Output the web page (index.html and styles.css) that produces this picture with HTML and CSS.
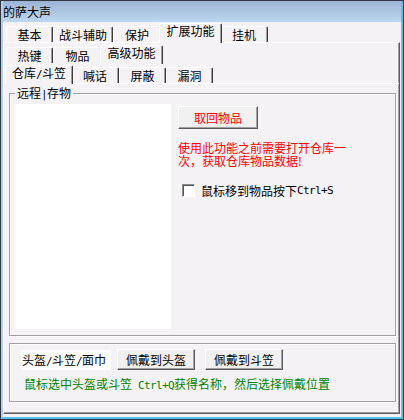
FILE: index.html
```html
<!DOCTYPE html>
<html lang="zh-CN">
<head>
<meta charset="utf-8">
<title>的萨大声</title>
<link rel="stylesheet" href="styles.css">
</head>
<body>
<div class="window">
  <div class="frame">
    <div class="title">的萨大声</div>
    <div class="client">
      <div class="strip s1">
        <div class="tab w47">基本</div>
        <div class="tab w60">战斗辅助</div>
        <div class="tab w48">保护</div>
        <div class="tab w63 sel">扩展功能</div>
        <div class="tab w48">挂机</div>
      </div>
      <div class="panel">
        <div class="strip s2">
          <div class="tab w47">热键</div>
          <div class="tab w49">物品</div>
          <div class="tab w63 sel">高级功能</div>
        </div>
        <div class="strip s3">
          <div class="tab w68 sel">仓库<span class="a">/</span>斗笠</div>
          <div class="tab w48">喊话</div>
          <div class="tab w47">屏蔽</div>
          <div class="tab w47">漏洞</div>
        </div>
        <div class="body">
          <fieldset class="grp g1">
            <legend>远程<span class="a">|</span>存物</legend>
            <div class="g1-row">
              <div class="list"></div>
              <div class="side">
                <button class="btn fetch">取回物品</button>
                <p class="warn">使用此功能之前需要打开仓库一次，获取仓库物品数据!</p>
                <label class="chk-row"><span class="chk"></span>鼠标移到物品按下<span class="a">Ctrl+S</span></label>
              </div>
            </div>
          </fieldset>
          <fieldset class="grp g2">
            <div class="g2-row">
              <div class="field">头盔<span class="a">/</span>斗笠<span class="a">/</span>面巾</div>
              <button class="btn wear">佩戴到头盔</button>
              <button class="btn wear wear2">佩戴到斗笠</button>
            </div>
            <p class="hint">鼠标选中头盔或斗笠<span class="a"> Ctrl+Q</span>获得名称，然后选择佩戴位置</p>
          </fieldset>
        </div>
      </div>
    </div>
  </div>
</div>
</body>
</html>
```

FILE: styles.css
```css
body {
  margin: 0;
}

.window {
  width: 404px;
  height: 420px;
  box-sizing: border-box;
  border: 1px solid #30363e;
  font: 12px/13px "Noto Sans CJK SC", sans-serif;
  color: #000;
}

.frame {
  height: 100%;
  box-sizing: border-box;
  border-left: 2px solid #b3d0ea;
  border-right: 2px solid #4fc4ee;
  border-bottom: 2px solid #4fc4ee;
  display: flex;
  flex-direction: column;
}

.title {
  height: 21px;
  flex: none;
  line-height: 21px;
  background: linear-gradient(#9cb4d5, #bdd7ef);
  white-space: nowrap;
}

.client {
  flex: 1;
  background: #f5f2f5;
  display: flex;
  flex-direction: column;
  min-height: 0;
}

.a {
  font-family: "DejaVu Sans Mono", monospace;
  font-size: 11px;
  letter-spacing: -0.62px;
}

/* tab strips */
.strip {
  display: flex;
  align-items: flex-end;
  height: 20px;
  flex: none;
}

.s1 {
  padding-left: 3px;
}

.s2 {
  padding-left: 2px;
}

.s3 {
  padding-left: 3px;
  border-bottom: 1px solid #fff;
}

.tab {
  box-sizing: border-box;
  height: 16px;
  padding-top: 1px;
  text-align: center;
  white-space: nowrap;
  background: #f5f2f5;
  border-top: 1px solid #fff;
  border-left: 1px solid #fff;
  border-right: 1px solid #3a3a3a;
  border-radius: 2px 2px 0 0;
  box-shadow: inset -1px 0 0 #a0a0a0;
}

.tab.sel {
  height: 19px;
  padding-top: 0;
  margin: 0 -2px -1px;
  position: relative;
  z-index: 1;
}

.s1 .tab.sel {
  height: 20px;
}

.w47 { width: 47px; }
.w48 { width: 48px; }
.w49 { width: 49px; }
.w60 { width: 60px; }
.w63 { width: 63px; }
.w68 { width: 68px; }

.panel {
  flex: 1;
  margin: 0 1px 3px 0;
  border-top: 1px solid #fff;
  border-left: 1px solid #fff;
  border-right: 1px solid #5c5c5c;
  border-bottom: 1px solid #5c5c5c;
  box-shadow: inset -1px -1px 0 #a0a0a0;
  display: flex;
  flex-direction: column;
}

.body {
  padding: 2px 3px 0 5px;
}

/* group boxes */
.grp {
  margin: 0;
  min-width: 0;
  border: 1px solid #a0a0a0;
  box-shadow: 1px 1px 0 #fff, inset 1px 1px 0 #fff;
}

.grp legend {
  padding: 0 2px;
  line-height: 13px;
  background: #f5f2f5;
}

.g1 {
  padding: 3px 0 6px 5px;
}

.g1-row {
  display: flex;
}

.list {
  width: 156px;
  height: 225px;
  background: #fff;
  flex: none;
}

.side {
  margin-left: 7px;
  padding-top: 2px;
}

.btn {
  display: block;
  box-sizing: border-box;
  margin: 0;
  padding: 0;
  font: inherit;
  line-height: 13px;
  color: #000;
  background: #f0f0f0;
  border: 1px solid;
  border-color: #fff #5c5c5c #5c5c5c #fff;
  box-shadow: inset -1px -1px 0 #a0a0a0;
  border-radius: 0;
}

.fetch {
  width: 80px;
  height: 23px;
  color: #f00;
}

.warn {
  margin: 12px 0 0;
  width: 170px;
  color: #f00;
}

.chk-row {
  display: flex;
  align-items: center;
  margin: 17px 0 0 4px;
  white-space: nowrap;
}

.chk {
  width: 13px;
  height: 13px;
  box-sizing: border-box;
  margin-right: 6px;
  background: #fff;
  border: 1px solid;
  border-color: #8a8a8a #fff #fff #8a8a8a;
  box-shadow: inset 1px 1px 0 #555;
  flex: none;
}

.g2 {
  margin-top: 7px;
  padding: 5px 0 9px 11px;
}

.g2-row {
  display: flex;
  align-items: flex-start;
}

.field {
  width: 90px;
  height: 20px;
  margin-top: 1px;
  box-sizing: border-box;
  padding-left: 1px;
  line-height: 20px;
  background: #fff;
  white-space: nowrap;
  overflow: hidden;
}

.wear {
  width: 78px;
  height: 21px;
  margin-left: 6px;
}

.wear2 {
  margin-left: 10px;
}

.hint {
  margin: 7px 0 0 3px;
  color: #008000;
  white-space: nowrap;
}
```
